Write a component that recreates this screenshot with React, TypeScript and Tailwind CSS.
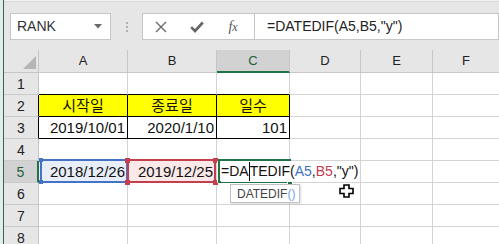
import React from "react";

const GRID = "border-[#d4d4d4]";

function RowHeader({ n, black }: { n: number; black?: boolean }) {
  return (
    <div
      className={`w-[35px] shrink-0 border-b border-b-[#cacaca] border-r ${
        black ? "border-r-black" : "border-r-[#c6c6c6]"
      } bg-[#e6e6e6] flex items-center justify-center text-[14px] text-[#222] leading-none`}
    >
      {n}
    </div>
  );
}

function PlainRest() {
  return (
    <>
      <div className={`w-[71px] shrink-0 border-r border-b ${GRID} bg-white`} />
      <div className={`w-[72px] shrink-0 border-r border-b ${GRID} bg-white`} />
      <div className={`flex-1 border-b ${GRID} bg-white`} />
    </>
  );
}

function PlainRow({ n }: { n: number }) {
  return (
    <div className="flex h-[22px] shrink-0">
      <RowHeader n={n} />
      <div className={`w-[89px] shrink-0 border-r border-b ${GRID} bg-white`} />
      <div className={`w-[89px] shrink-0 border-r border-b ${GRID} bg-white`} />
      <div className={`w-[73px] shrink-0 border-r border-b ${GRID} bg-white`} />
      <PlainRest />
    </div>
  );
}

export default function App() {
  return (
    <div className="relative w-[499px] h-[244px] overflow-hidden flex bg-[#e6e6e6] font-['Liberation_Sans','Noto_Sans_CJK_KR',sans-serif]">
      <div className="w-[3px] shrink-0 bg-[#e9e9e9]" />
      <div className="w-[1px] shrink-0 bg-[#217346]" />
      <div className="flex-1 min-w-0 flex flex-col">
        {/* formula bar */}
        <div className="h-[50px] shrink-0 flex flex-col">
          <div className="h-[2px] bg-[#f1f1f1] border-b border-[#dadada]" />
          <div className="flex mt-[11px] h-[27px]">
            <div className="ml-[6px] w-[101px] h-[27px] bg-white border border-[#c6c6c6] flex items-center pl-[6px] pr-[8px] text-[14px] text-[#333]">
              <span className="flex-1">RANK</span>
              <svg width="8" height="5" viewBox="0 0 8 5">
                <path d="M0 0H8L4 4.5Z" fill="#6a6a6a" />
              </svg>
            </div>
            <div className="w-[31px] h-[27px] flex flex-col items-center justify-center gap-[2px]">
              <div className="w-[2px] h-[2px] bg-[#b0b0b0]" />
              <div className="w-[2px] h-[2px] bg-[#b0b0b0]" />
              <div className="w-[2px] h-[2px] bg-[#b0b0b0]" />
            </div>
            <div className="w-[113px] h-[27px] bg-white border border-[#c6c6c6] flex items-center">
              <div className="w-[36px] flex justify-center">
                <svg width="12" height="12" viewBox="0 0 12 12">
                  <path d="M1 1L11 11M11 1L1 11" stroke="#6b6b6b" strokeWidth="1.4" fill="none" />
                </svg>
              </div>
              <div className="w-[36px] flex justify-center">
                <svg width="14" height="12" viewBox="0 0 14 12">
                  <path d="M1.2 6.2L5 10L12.8 1.5" stroke="#666" strokeWidth="2.6" fill="none" />
                </svg>
              </div>
              <div className="w-[36px] flex justify-center">
                <span className="font-['Liberation_Serif',serif] italic text-[14px] text-[#555] leading-none">
                  f<span className="text-[12px]">x</span>
                </span>
              </div>
            </div>
            <div className="flex-1 h-[27px] bg-white border border-l-0 border-[#c6c6c6] pl-[12px] flex items-center text-[14px] text-[#222] whitespace-nowrap">
              =DATEDIF(A5,B5,"y")
            </div>
          </div>
        </div>

        {/* column headers */}
        <div className="flex h-[23px] shrink-0 text-[13px] text-[#222]">
          <div className="relative w-[35px] shrink-0 border-r border-b border-[#c6c6c6] bg-[#e6e6e6]">
            <svg className="absolute right-[2px] bottom-[3px]" width="13" height="13" viewBox="0 0 13 13">
              <path d="M13 0V13H0Z" fill="#b5b5b5" />
            </svg>
          </div>
          <div className="w-[89px] shrink-0 border-r border-b border-[#c6c6c6] flex items-center justify-center">A</div>
          <div className="w-[89px] shrink-0 border-r border-b border-[#c6c6c6] flex items-center justify-center">B</div>
          <div className="w-[73px] shrink-0 border-r border-r-[#c6c6c6] border-b-2 border-b-[#217346] bg-[#d2d2d2] flex items-center justify-center text-[#1f5f38]">
            C
          </div>
          <div className="w-[71px] shrink-0 border-r border-b border-[#c6c6c6] flex items-center justify-center">D</div>
          <div className="w-[72px] shrink-0 border-r border-b border-[#c6c6c6] flex items-center justify-center">E</div>
          <div className="flex-1 border-b border-[#c6c6c6] flex items-center justify-center">F</div>
        </div>

        {/* row 1 */}
        <div className="flex h-[22px] shrink-0">
          <RowHeader n={1} />
          <div className={`w-[89px] shrink-0 border-r ${GRID} border-b border-b-black bg-white`} />
          <div className={`w-[89px] shrink-0 border-r ${GRID} border-b border-b-black bg-white`} />
          <div className={`w-[73px] shrink-0 border-r ${GRID} border-b border-b-black bg-white`} />
          <PlainRest />
        </div>

        {/* row 2 */}
        <div className="flex h-[22px] shrink-0 text-[15px] text-[#111]">
          <RowHeader n={2} black />
          <div className="w-[89px] shrink-0 border-r border-b border-black bg-[#ffff00] flex items-center justify-center leading-[21px]">시작일</div>
          <div className="w-[89px] shrink-0 border-r border-b border-black bg-[#ffff00] flex items-center justify-center leading-[21px]">종료일</div>
          <div className="w-[73px] shrink-0 border-r border-b border-black bg-[#ffff00] flex items-center justify-center leading-[21px]">일수</div>
          <PlainRest />
        </div>

        {/* row 3 */}
        <div className="flex h-[22px] shrink-0 text-[15px] text-[#111]">
          <RowHeader n={3} black />
          <div className="w-[89px] shrink-0 border-r border-b border-black bg-white flex items-center justify-end pr-[2px] leading-[21px]">2019/10/01</div>
          <div className="w-[89px] shrink-0 border-r border-b border-black bg-white flex items-center justify-end pr-[2px] leading-[21px]">2020/1/10</div>
          <div className="w-[73px] shrink-0 border-r border-b border-black bg-white flex items-center justify-end pr-[2px] leading-[21px]">101</div>
          <PlainRest />
        </div>

        <PlainRow n={4} />

        {/* row 5 */}
        <div className="flex h-[22px] shrink-0 text-[15px] text-[#111]">
          <div className="w-[35px] shrink-0 border-b border-b-[#cacaca] border-r-2 border-r-[#217346] bg-[#d2d2d2] flex items-center justify-center text-[14px] text-[#1f5f38] leading-none">
            5
          </div>
          <div className={`relative w-[89px] shrink-0 border-r border-b ${GRID} bg-[#e8eef9] flex items-center justify-end pr-[2px] leading-[21px]`}>
            <div className="absolute -top-[2px] left-[1px] -right-[1px] -bottom-[1px] border-2 border-[#4472c4]" />
            <div className="absolute -top-[3px] left-[0px] w-[4px] h-[4px] bg-[#4472c4]" />
            <div className="absolute -bottom-[2px] left-[0px] w-[4px] h-[4px] bg-[#4472c4]" />
            <span className="relative">2018/12/26</span>
          </div>
          <div className={`relative w-[89px] shrink-0 border-r border-b ${GRID} bg-[#fbe9ea] flex items-center justify-end pr-[3px] leading-[21px]`}>
            <div className="absolute -top-[2px] -left-[1px] right-[0px] -bottom-[1px] border-2 border-[#c43e4e]" />
            <div className="absolute -top-[3px] -left-[3px] w-[5px] h-[5px] bg-[#c43e4e]" />
            <div className="absolute -top-[3px] -right-[2px] w-[5px] h-[5px] bg-[#c43e4e]" />
            <div className="absolute -bottom-[3px] -left-[3px] w-[5px] h-[5px] bg-[#c43e4e]" />
            <div className="absolute -bottom-[3px] -right-[2px] w-[5px] h-[5px] bg-[#c43e4e]" />
            <span className="relative">2019/12/25</span>
          </div>
          <div className={`relative z-10 w-[73px] shrink-0 border-b ${GRID} bg-white flex items-center leading-[21px] whitespace-nowrap`}>
            <div className="absolute -top-[2px] left-[1px] -right-[1px] -bottom-[1px] border-2 border-r-0 border-[#217346]" />
            <div className="absolute -bottom-[3px] -right-[3px] w-[6px] h-[6px] bg-[#217346] border border-white" />
            <span className="relative ml-[4px] text-[14px] text-[#111] bg-white flex items-center h-[20px] pr-[1px]">
              =DA<span className="inline-block w-[1px] h-[19px] bg-black" />TEDIF(<span className="text-[#4472c4]">A5</span>,
              <span className="text-[#c43e4e]">B5</span>,"y")
            </span>
            <div className="absolute left-[13px] top-[23px] w-[70px] h-[19px] bg-white border border-[#c0c0c0] shadow-[1px_1px_2px_rgba(0,0,0,0.15)] flex items-center pl-[6px] text-[12px] text-[#444] leading-none">
              DATEDIF<span className="text-[#6fa2dc]">()</span>
            </div>
          </div>
          <PlainRest />
        </div>

        <PlainRow n={6} />
        <PlainRow n={7} />
        <PlainRow n={8} />
      </div>

      {/* mouse cursor */}
      <svg className="absolute left-[339px] top-[184px]" width="15" height="14" viewBox="0 0 15 14">
        <path d="M5 1H10V4.5H14V9.5H10V13H5V9.5H1V4.5H5Z" fill="white" stroke="black" strokeWidth="1.6" />
      </svg>
    </div>
  );
}
